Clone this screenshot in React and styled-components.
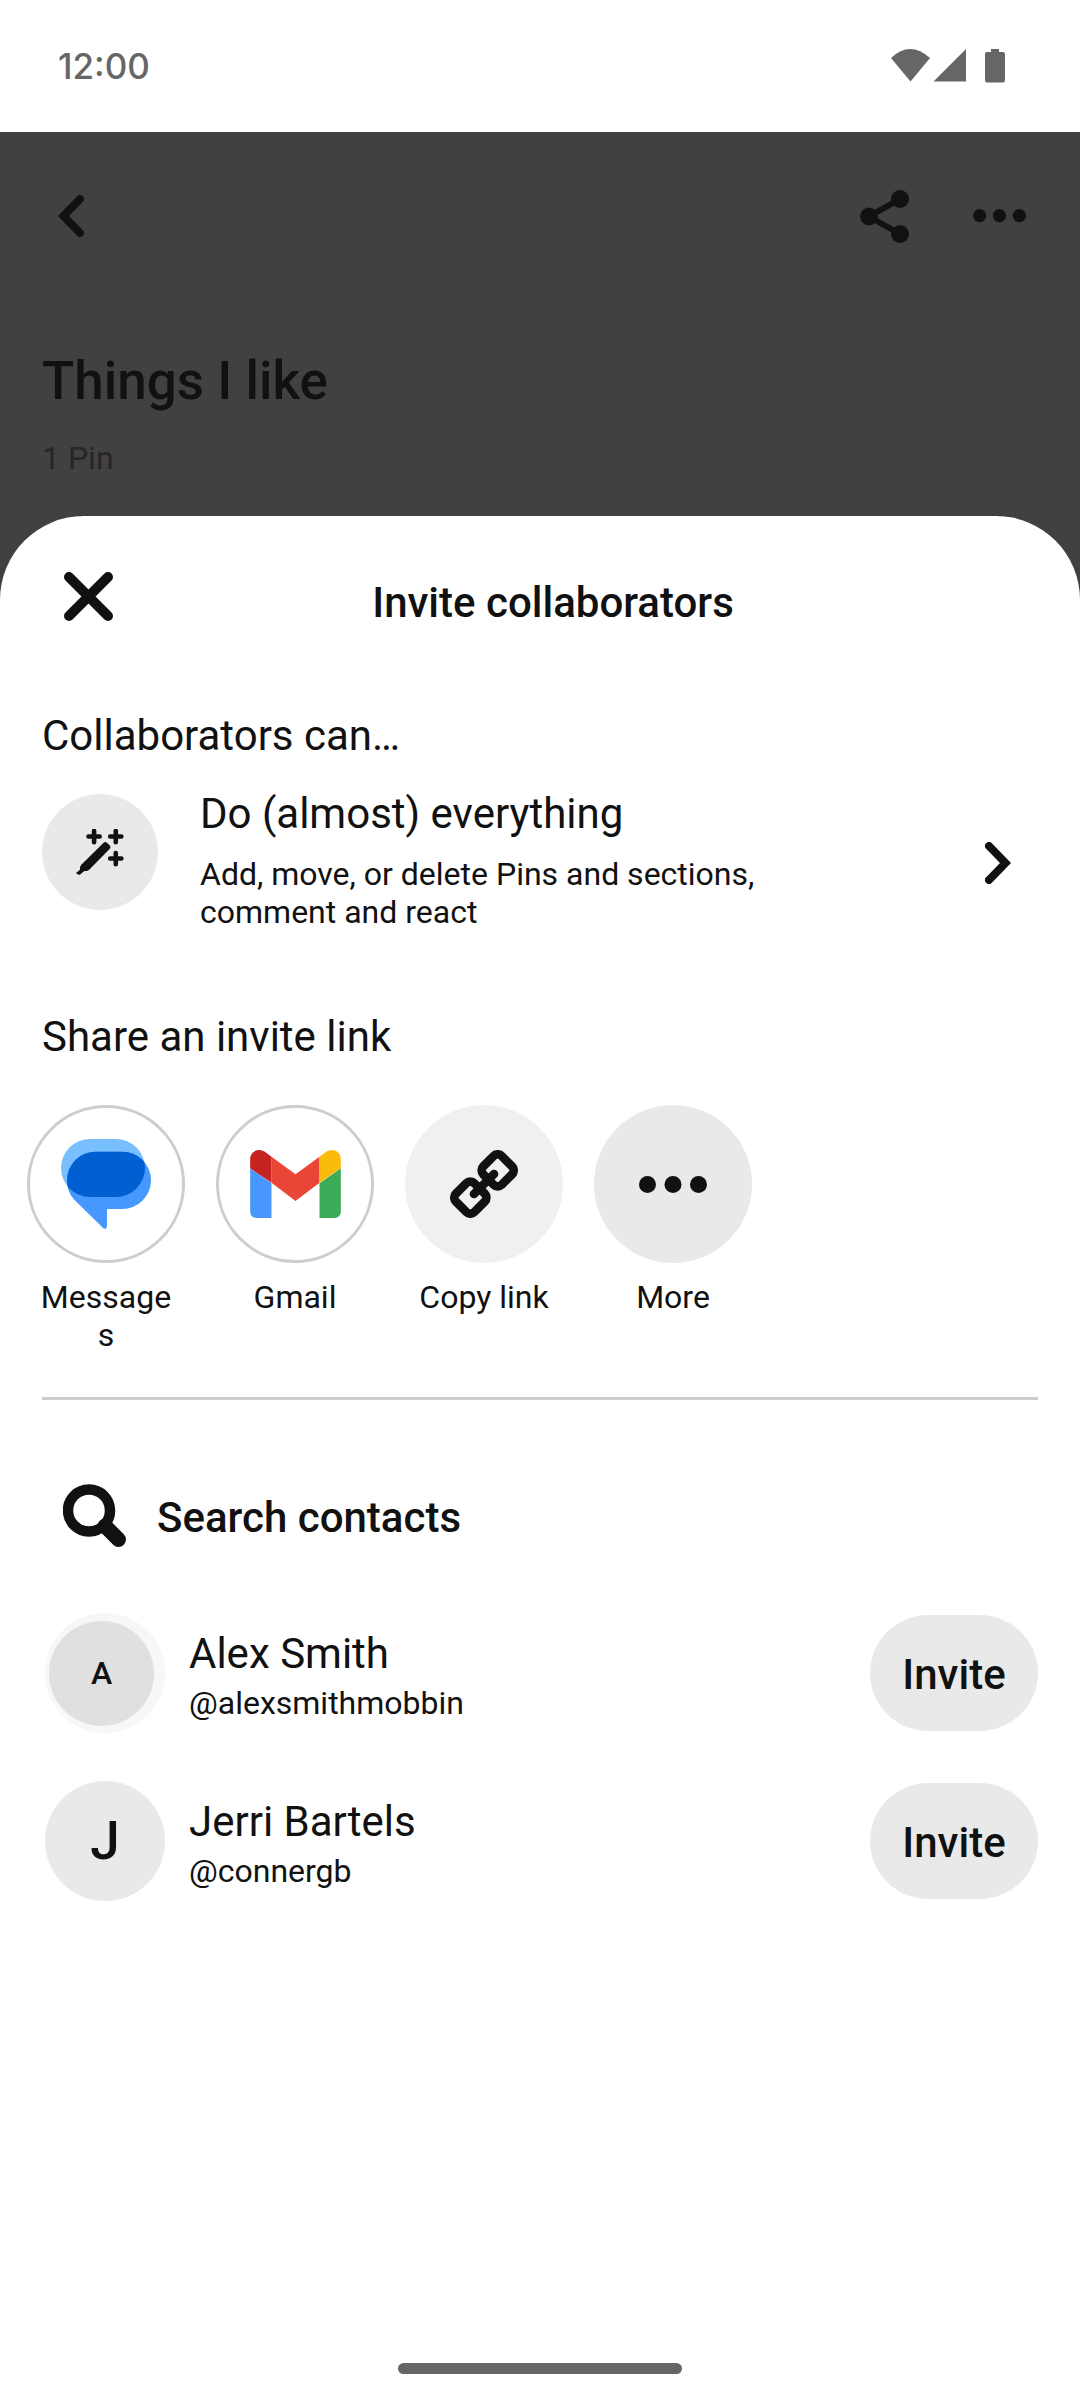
import React, { useState } from "react";
import styled, { createGlobalStyle } from "styled-components";

const GlobalStyle = createGlobalStyle`
  *, *::before, *::after {
    box-sizing: border-box;
  }
  body {
    margin: 0;
    background: #fff;
    color: #111;
    font-family: Roboto, "Liberation Sans", sans-serif;
  }
  h1, h2, p, ul {
    margin: 0;
    padding: 0;
  }
  button {
    border: none;
    padding: 0;
    background: none;
    color: inherit;
    font: inherit;
    text-align: left;
    cursor: pointer;
  }
  svg {
    display: block;
    flex-shrink: 0;
  }
`;

const Screen = styled.div`
  display: flex;
  flex-direction: column;
  min-height: 100vh;
`;

const StatusBar = styled.header`
  display: flex;
  align-items: center;
  justify-content: space-between;
  height: 132px;
  padding: 0 75px 0 58px;
  color: #666;
`;

const Time = styled.time`
  font-family: Inter, Roboto, sans-serif;
  font-size: 35px;
  font-weight: 500;
  line-height: 44px;
`;

const StatusIcons = styled.div`
  display: flex;
  align-items: center;
`;

const Backdrop = styled.main`
  display: flex;
  flex: 1;
  flex-direction: column;
  background: #414141;
`;

const Toolbar = styled.div`
  display: flex;
  align-items: center;
  height: 168px;
  padding: 0 28px;
`;

const ToolbarButton = styled.button`
  display: flex;
  align-items: center;
  justify-content: center;
  width: ${(props) => props.$width || 106}px;
  height: 106px;
`;

const Spacer = styled.div`
  flex: 1;
`;

const Board = styled.section`
  padding: 50px 42px 39px;
`;

const BoardTitle = styled.h1`
  font-size: 53px;
  font-weight: 500;
  line-height: 62px;
`;

const PinCount = styled.p`
  margin-top: 27px;
  color: #262626;
  font-size: 32px;
  line-height: 38px;
`;

const Sheet = styled.section`
  display: flex;
  flex: 1;
  flex-direction: column;
  border-radius: 84px 84px 0 0;
  background: #fff;
`;

const SheetHeader = styled.div`
  display: grid;
  grid-template-columns: 92px 1fr 66px;
  align-items: end;
  padding: 33px 42px 0;
`;

const CloseButton = styled.button`
  display: flex;
  align-items: center;
  justify-content: center;
  height: 94px;
`;

const SheetTitle = styled.h2`
  font-size: 42px;
  font-weight: 500;
  line-height: 80px;
  text-align: center;
`;

const SectionTitle = styled.h2`
  padding: 0 42px;
  margin-top: ${(props) => props.$top}px;
  font-size: 42px;
  font-weight: 400;
  line-height: 50px;
`;

const PermissionRow = styled.button`
  display: flex;
  gap: 42px;
  min-height: 148px;
  padding: 0 42px;
  margin-top: 28px;
`;

const PermissionIcon = styled.span`
  display: flex;
  align-items: center;
  justify-content: center;
  flex-shrink: 0;
  width: 116px;
  height: 116px;
  margin-top: 5px;
  border-radius: 50%;
  background: #e9e9e9;
`;

const PermissionText = styled.span`
  flex: 1;
  padding-right: 100px;
`;

const Primary = styled.span`
  display: block;
  font-size: 42px;
  line-height: 50px;
`;

const Secondary = styled.span`
  display: block;
  margin-top: ${(props) => props.$top}px;
  font-size: 32px;
  line-height: 38px;
`;

const Chevron = styled.span`
  display: flex;
  align-self: center;
  justify-content: center;
  width: 80px;
`;

const ShareList = styled.ul`
  display: flex;
  gap: 31px;
  padding: 0 27px;
  margin-top: 43px;
  list-style: none;
`;

const ShareButton = styled.button`
  display: flex;
  flex-direction: column;
  align-items: center;
  gap: 15px;
  width: 158px;
`;

const ShareCircle = styled.span`
  display: flex;
  align-items: center;
  justify-content: center;
  width: 158px;
  height: 158px;
  border: ${(props) => (props.$outlined ? "3px solid #cdcdcd" : "none")};
  border-radius: 50%;
  background: ${(props) => props.$background || "#fff"};
`;

const ShareLabel = styled.span`
  width: 136px;
  font-size: 32px;
  line-height: 38px;
  text-align: center;
  overflow-wrap: anywhere;
`;

const Divider = styled.hr`
  width: auto;
  height: 3px;
  border: none;
  margin: 43px 42px 0;
  background: #cdcdcd;
`;

const SearchButton = styled.button`
  display: flex;
  align-items: flex-end;
  gap: 30px;
  padding: 0 63px;
  margin-top: 84px;
  font-size: 42px;
  font-weight: 500;
  line-height: 60px;
`;

const ContactList = styled.ul`
  display: flex;
  flex-direction: column;
  gap: 48px;
  padding: 0 42px 0 45px;
  margin-top: 65px;
  list-style: none;
`;

const Contact = styled.li`
  display: flex;
  align-items: center;
  gap: 24px;
`;

const Avatar = styled.span`
  display: flex;
  align-items: center;
  justify-content: center;
  flex-shrink: 0;
  width: 120px;
  height: 120px;
  border-radius: 50%;
  background: #e9e9e9;
  font-size: 53px;
  font-weight: 500;
`;

const RingAvatar = styled(Avatar)`
  justify-content: flex-start;
  padding-left: 4px;
  background: #f7f7f7;
  font-size: 32px;
`;

const AvatarDisc = styled.span`
  display: flex;
  align-items: center;
  justify-content: center;
  width: 105px;
  height: 105px;
  border-radius: 50%;
  background: #e0e0e0;
`;

const ContactInfo = styled.div`
  flex: 1;
  padding-top: 5px;
`;

const InviteButton = styled.button`
  min-width: 168px;
  height: 116px;
  padding: 2px 32px 0;
  border-radius: 58px;
  background: #e9e9e9;
  font-size: 42px;
  font-weight: 500;
  text-align: center;
`;

const HomeBar = styled.div`
  width: 284px;
  height: 11px;
  border-radius: 6px;
  margin: auto auto 26px;
  background: #666;
`;

const StatusGlyphs = () => (
  <svg width="114" height="34" viewBox="0 0 114 34" fill="currentColor">
    <path d="M0 9 Q19 -9 39 9 L19.500 32.500 Z" />
    <path d="M75 0 V32.500 H42.500 Z" />
    <path d="M100 0 H108 V3 H112 Q114 3 114 5 V31 Q114 33.500 112 33.500 H96 Q94 33.500 94 31 V5 Q94 3 96 3 H100 Z" />
  </svg>
);

const ChevronIcon = ({ direction }) => (
  <svg width="26" height="42" viewBox="0 0 26 42">
    <path
      d={direction === "left" ? "M22 4 L5.500 21 L22 38" : "M4 4 L20.500 21 L4 38"}
      fill="none"
      stroke="#111"
      strokeWidth="8"
      strokeLinecap="round"
    />
  </svg>
);

const ShareIcon = () => (
  <svg width="49" height="53" viewBox="0 0 147 159" fill="#111">
    <path d="M120 27 L27 79.500 L120 132" fill="none" stroke="#111" strokeWidth="18" />
    <circle cx="27" cy="79.500" r="27" />
    <circle cx="120" cy="27" r="27" />
    <circle cx="120" cy="132" r="27" />
  </svg>
);

const DotsIcon = ({ width }) => (
  <svg width={width} height={width / 4} viewBox="0 0 204 51" fill="#111">
    <circle cx="25.500" cy="25.500" r="25.500" />
    <circle cx="102" cy="25.500" r="25.500" />
    <circle cx="178.500" cy="25.500" r="25.500" />
  </svg>
);

const CloseIcon = () => (
  <svg width="49" height="49" viewBox="0 0 49 49">
    <path d="M5 5 L44 44 M44 5 L5 44" stroke="#111" strokeWidth="10" strokeLinecap="round" />
  </svg>
);

const WandIcon = () => (
  <svg width="48" height="46" viewBox="0 0 146 140" fill="#111">
    <path d="M84 42 Q89 37 94 42 L103 50 Q107 55 103 60 L40 124 Q35 129 28 128 L23 129 L12 139 Q5 140 0 134 L12 124 Q11 113 16 109 Z" />
    <path
      d="M38 23 H72 M55 6 V40 M104 23 H138 M121 6 V40 M104 90 H138 M121 73 V107"
      stroke="#111"
      strokeWidth="14"
      strokeLinecap="round"
    />
  </svg>
);

const MessagesLogo = () => (
  <svg width="90" height="90" viewBox="0 0 270 270">
    <clipPath id="front-bubble">
      <rect x="18" y="38" width="252" height="172" rx="86" />
    </clipPath>
    <rect width="252" height="174" rx="87" fill="#78bfff" />
    <path
      d="M104 38 H184 A86 86 0 0 1 184 210 H138 V262 Q137 273 127 268 L40 182 Q18 160 18 124 A86 86 0 0 1 104 38 Z"
      fill="#4697fe"
    />
    <rect width="252" height="174" rx="87" fill="#0060d1" clipPath="url(#front-bubble)" />
  </svg>
);

const GmailLogo = () => (
  <svg width="91" height="68" viewBox="0 0 272 204">
    <path d="M0 55 L64 100 V204 H20 Q0 204 0 184 Z" fill="#4797fd" />
    <path d="M272 55 L208 100 V204 H252 Q272 204 272 184 Z" fill="#3cab57" />
    <path d="M64 20 L136 73 L208 20 V98 L136 153 L64 98 Z" fill="#ea4638" />
    <path d="M64 20 V98 L0 55 V28 C0 2 28 -8 48 8 Z" fill="#c52421" />
    <path d="M208 20 V98 L272 55 V28 C272 2 244 -8 224 8 Z" fill="#fabb0c" />
  </svg>
);

const LinkIcon = () => (
  <svg width="68" height="68" viewBox="0 0 204 204" fill="none" stroke="#111" strokeWidth="26">
    <rect x="104" y="22" width="78" height="78" rx="17" transform="rotate(45 143 61)" />
    <rect x="22" y="104" width="78" height="78" rx="17" transform="rotate(45 61 143)" />
    <path d="M132 72 L72 132" strokeLinecap="round" />
  </svg>
);

const SearchIcon = () => (
  <svg width="64" height="64" viewBox="0 0 64 64" fill="none" stroke="#111">
    <circle cx="26" cy="26.500" r="21" strokeWidth="10.500" />
    <path d="M42 42 L55.500 55.500" strokeWidth="15" strokeLinecap="round" />
  </svg>
);

const shareTargets = [
  { label: "Messages", icon: <MessagesLogo />, outlined: true },
  { label: "Gmail", icon: <GmailLogo />, outlined: true },
  { label: "Copy link", icon: <LinkIcon />, background: "#f0f0f0" },
  { label: "More", icon: <DotsIcon width={68} />, background: "#e9e9e9" },
];

const contacts = [
  { name: "Alex Smith", handle: "@alexsmithmobbin", ring: true },
  { name: "Jerri Bartels", handle: "@connergb", ring: false },
];

const App = () => {
  const [invited, setInvited] = useState([]);

  const handleInvite = (handle) => {
    setInvited([...invited, handle]);
  };

  return (
    <Screen>
      <GlobalStyle />
      <StatusBar>
        <Time>12:00</Time>
        <StatusIcons>
          <StatusGlyphs />
        </StatusIcons>
      </StatusBar>

      <Backdrop>
        <Toolbar>
          <ToolbarButton $width={86} aria-label="Back">
            <ChevronIcon direction="left" />
          </ToolbarButton>
          <Spacer />
          <ToolbarButton $width={124} aria-label="Share board">
            <ShareIcon />
          </ToolbarButton>
          <ToolbarButton aria-label="Board options">
            <DotsIcon width={53} />
          </ToolbarButton>
        </Toolbar>
        <Board>
          <BoardTitle>Things I like</BoardTitle>
          <PinCount>1 Pin</PinCount>
        </Board>

        <Sheet role="dialog" aria-labelledby="sheet-title">
          <SheetHeader>
            <CloseButton aria-label="Close">
              <CloseIcon />
            </CloseButton>
            <SheetTitle id="sheet-title">Invite collaborators</SheetTitle>
          </SheetHeader>

          <SectionTitle $top={68}>Collaborators can…</SectionTitle>
          <PermissionRow>
            <PermissionIcon>
              <WandIcon />
            </PermissionIcon>
            <PermissionText>
              <Primary>Do (almost) everything</Primary>
              <Secondary $top={16}>
                Add, move, or delete Pins and sections, comment and react
              </Secondary>
            </PermissionText>
            <Chevron>
              <ChevronIcon direction="right" />
            </Chevron>
          </PermissionRow>

          <SectionTitle $top={75}>Share an invite link</SectionTitle>
          <ShareList>
            {shareTargets.map((target) => (
              <li key={target.label}>
                <ShareButton>
                  <ShareCircle $outlined={target.outlined} $background={target.background}>
                    {target.icon}
                  </ShareCircle>
                  <ShareLabel>{target.label}</ShareLabel>
                </ShareButton>
              </li>
            ))}
          </ShareList>
          <Divider />

          <SearchButton>
            <SearchIcon />
            Search contacts
          </SearchButton>
          <ContactList>
            {contacts.map((contact) => (
              <Contact key={contact.handle}>
                {contact.ring ? (
                  <RingAvatar>
                    <AvatarDisc>{contact.name[0]}</AvatarDisc>
                  </RingAvatar>
                ) : (
                  <Avatar>{contact.name[0]}</Avatar>
                )}
                <ContactInfo>
                  <Primary>{contact.name}</Primary>
                  <Secondary $top={5}>{contact.handle}</Secondary>
                </ContactInfo>
                <InviteButton
                  disabled={invited.includes(contact.handle)}
                  onClick={() => handleInvite(contact.handle)}
                >
                  Invite
                </InviteButton>
              </Contact>
            ))}
          </ContactList>
          <HomeBar />
        </Sheet>
      </Backdrop>
    </Screen>
  );
};

export default App;
